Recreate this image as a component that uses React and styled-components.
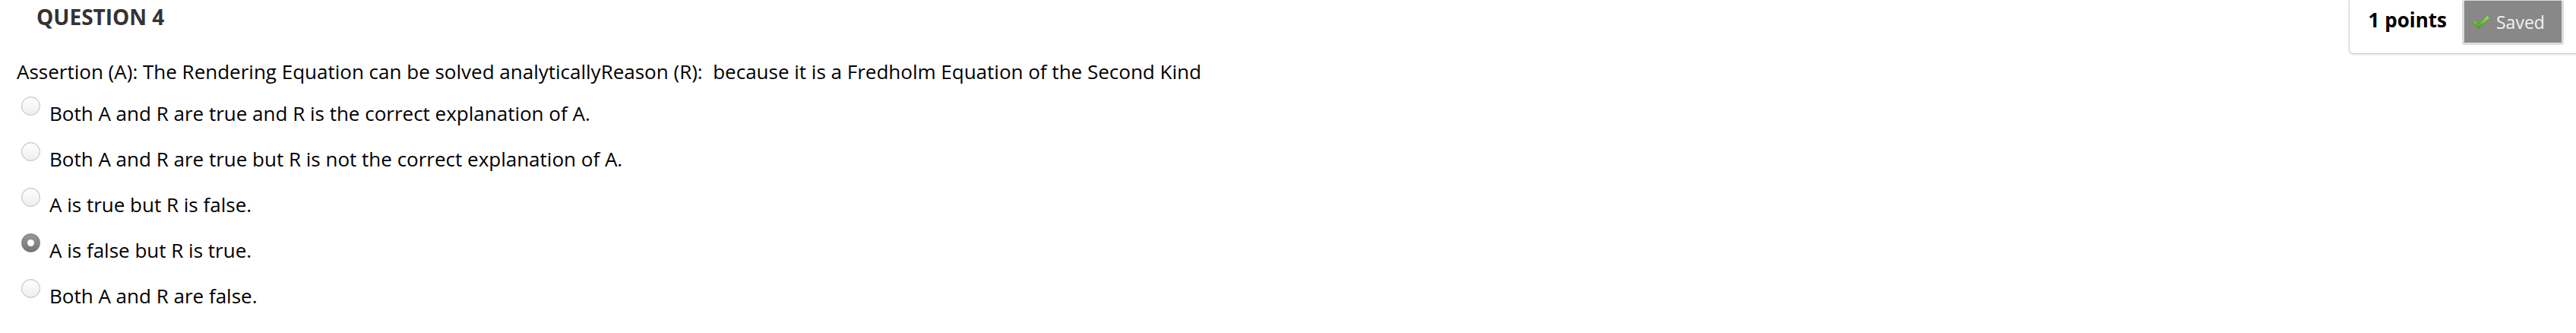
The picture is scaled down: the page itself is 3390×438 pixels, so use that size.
import styled, { createGlobalStyle } from 'styled-components';

const GlobalStyle = createGlobalStyle`
  body {
    margin: 0;
    background: #ffffff;
    font-family: "Open Sans", "Liberation Sans", sans-serif;
  }
`;

const options = [
  'Both A and R are true and R is the correct explanation of A.',
  'Both A and R are true but R is not the correct explanation of A.',
  'A is true but R is false.',
  'A is false but R is true.',
  'Both A and R are false.',
];

export default function App() {
  const selected = 3;

  return (
    <>
      <GlobalStyle />
      <Page>
        <Header>
          <Title>QUESTION 4</Title>
          <PointsBox>
            <Points>1 points</Points>
            <SavedButton>
              <CheckIcon />
              Saved
            </SavedButton>
          </PointsBox>
        </Header>
        <Body>
          <Prompt>
            Assertion (A): The Rendering Equation can be solved analyticallyReason (R):&nbsp; because it is a Fredholm Equation of the Second Kind
          </Prompt>
          <OptionList>
            {options.map((text, i) => (
              <Option key={i}>
                <Radio checked={i === selected} />
                <OptionText>{text}</OptionText>
              </Option>
            ))}
          </OptionList>
        </Body>
      </Page>
    </>
  );
}

function CheckIcon() {
  return (
    <svg width="26" height="22" viewBox="0 0 26 22">
      <defs>
        <linearGradient id="chk" x1="0" y1="0" x2="0" y2="1">
          <stop offset="0" stopColor="#a6e56a" />
          <stop offset="1" stopColor="#3f9a1c" />
        </linearGradient>
      </defs>
      <path
        d="M1.5 11.5 L5 8.5 L10 13 L21.5 2.5 L24.5 5.5 L10 19.5 Z"
        fill="url(#chk)"
        stroke="#4c8a2a"
        strokeWidth="0.6"
      />
    </svg>
  );
}

const Page = styled.div`
  width: 3390px;
  height: 438px;
  overflow: hidden;
`;

const Header = styled.div`
  display: flex;
  justify-content: space-between;
  align-items: flex-start;
  height: 71px;
`;

const Title = styled.h2`
  margin: 5px 0 0 48px;
  font-size: 28px;
  line-height: 34px;
  font-weight: 700;
  color: #333333;
`;

const PointsBox = styled.div`
  display: flex;
  align-items: flex-start;
  gap: 20px;
  height: 71px;
  box-sizing: border-box;
  padding: 0 16px 0 25px;
  border: 1px solid #cfcfcf;
  border-top: none;
  border-right: none;
  border-bottom-left-radius: 6px;
  box-shadow: 0 1px 3px rgba(0, 0, 0, 0.12);
`;

const Points = styled.span`
  margin-top: 10px;
  font-size: 26px;
  font-weight: 700;
  color: #000000;
  line-height: 32px;
`;

const SavedButton = styled.div`
  display: flex;
  align-items: center;
  gap: 7px;
  width: 134px;
  height: 59px;
  box-sizing: border-box;
  padding: 0 0 0 9px;
  background: #888888;
  border: 3px solid #dcdcdc;
  border-top-width: 1px;
  border-radius: 3px;
  font-size: 23px;
  color: #f2f2f2;
`;

const Body = styled.div`
  padding-left: 22px;
`;

const Prompt = styled.p`
  margin: 5px 0 0 0;
  font-size: 26px;
  line-height: 36px;
  color: #000000;
`;

const OptionList = styled.div`
  display: flex;
  flex-direction: column;
  margin-top: 10px;
`;

const Option = styled.label`
  display: flex;
  align-items: flex-start;
  height: 60px;
`;

const Radio = styled.span`
  flex: none;
  width: 25px;
  height: 25px;
  box-sizing: border-box;
  margin: 5px 12px 0 6px;
  border-radius: 50%;
  position: relative;
  border: 1px solid ${(p) => (p.checked ? '#7a7a7a' : '#bdbdbd')};
  background: ${(p) =>
    p.checked
      ? 'linear-gradient(#9a9a9a, #747474)'
      : 'linear-gradient(#ffffff, #eeeeee)'};
  box-shadow: inset 0 1px 1px rgba(0, 0, 0, 0.06);

  &::after {
    content: '';
    display: ${(p) => (p.checked ? 'block' : 'none')};
    position: absolute;
    left: 50%;
    top: 50%;
    width: 9px;
    height: 9px;
    margin: -4.5px 0 0 -4.5px;
    border-radius: 50%;
    background: #ffffff;
  }
`;

const OptionText = styled.span`
  margin-top: 9px;
  font-size: 26px;
  line-height: 36px;
  color: #000000;
`;
